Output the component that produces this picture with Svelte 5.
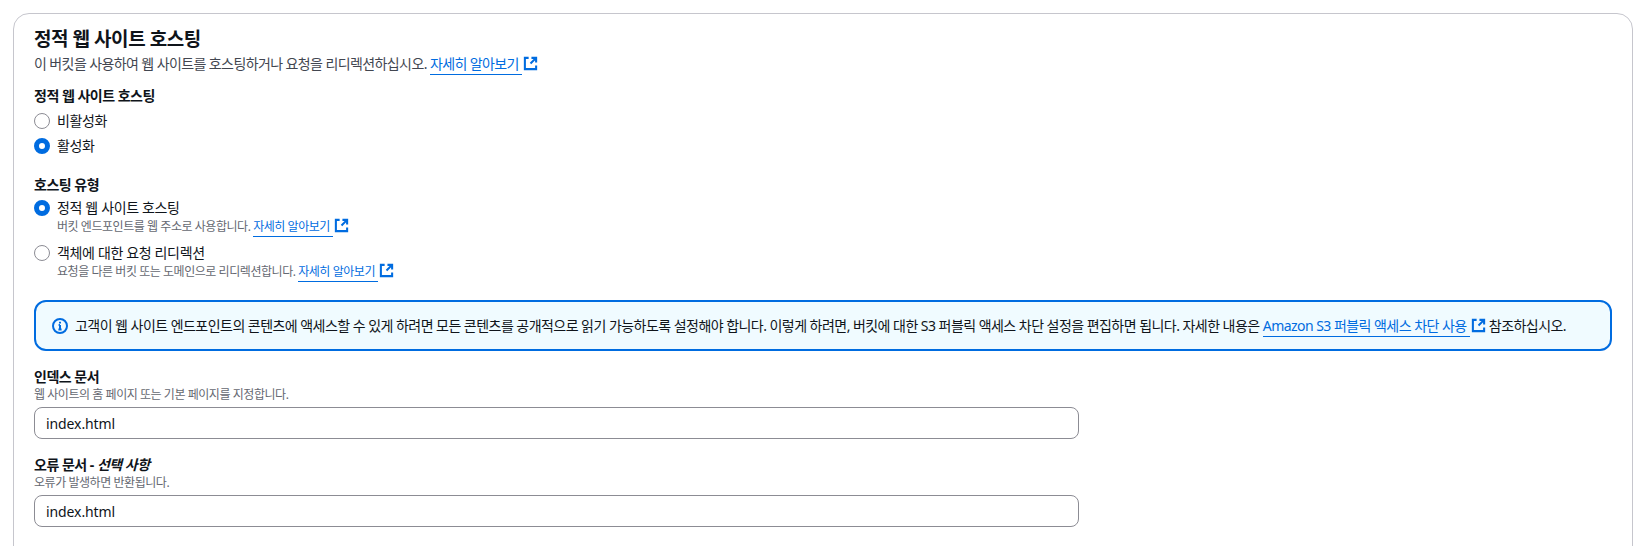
<script>
	const hostingTypes = [
		{ label: '정적 웹 사이트 호스팅', hint: '버킷 엔드포인트를 웹 주소로 사용합니다.', checked: true },
		{ label: '객체에 대한 요청 리디렉션', hint: '요청을 다른 버킷 또는 도메인으로 리디렉션합니다.', checked: false }
	];
</script>

{#snippet external()}
	<svg class="ext" viewBox="0 0 16 16" aria-hidden="true">
		<path d="M6 2H2v12h12v-4" />
		<path d="M9 2h5v5M14 2 8 8" />
	</svg>
{/snippet}

{#snippet more(text)}
	<a href="#top" class="link"><span class="link-text">{text}&nbsp;</span>{@render external()}</a>
{/snippet}

<main class="page">
	<section class="card">
		<header class="head">
			<h2>정적 웹 사이트 호스팅</h2>
			<p>이 버킷을 사용하여 웹 사이트를 호스팅하거나 요청을 리디렉션하십시오. {@render more('자세히 알아보기')}</p>
		</header>

		<div class="field">
			<div class="label">정적 웹 사이트 호스팅</div>
			<div class="radio-row"><span class="radio"></span><span>비활성화</span></div>
			<div class="radio-row"><span class="radio on"></span><span>활성화</span></div>
		</div>

		<div class="field types">
			<div class="label">호스팅 유형</div>
			{#each hostingTypes as item}
				<div class="radio-row rich">
					<span class="radio" class:on={item.checked}></span>
					<div>
						<div>{item.label}</div>
						<div class="hint">{item.hint} {@render more('자세히 알아보기')}</div>
					</div>
				</div>
			{/each}
		</div>

		<div class="alert">
			<svg class="info" viewBox="0 0 16 16" aria-hidden="true">
				<circle cx="8" cy="8" r="7" />
				<path d="M8 7v4.5M6.4 11.5h3.2M6.6 7H8" />
				<path d="M8 3.8v1.7" />
			</svg>
			<p>고객이 웹 사이트 엔드포인트의 콘텐츠에 액세스할 수 있게 하려면 모든 콘텐츠를 공개적으로 읽기 가능하도록 설정해야 합니다. 이렇게 하려면, 버킷에 대한 S3 퍼블릭 액세스 차단 설정을 편집하면 됩니다. 자세한 내용은 {@render more('Amazon S3 퍼블릭 액세스 차단 사용')} 참조하십시오.</p>
		</div>

		<div class="field input-field">
			<div class="label">인덱스 문서</div>
			<div class="hint">웹 사이트의 홈 페이지 또는 기본 페이지를 지정합니다.</div>
			<input type="text" value="index.html" />
		</div>

		<div class="field input-field second">
			<div class="label">오류 문서 - <i>선택 사항</i></div>
			<div class="hint">오류가 발생하면 반환됩니다.</div>
			<input type="text" value="index.html" />
		</div>
	</section>
</main>

<style>
	:global(body) {
		background: #fff;
		overflow: hidden;
	}

	.page {
		height: 546px;
		padding: 13px 13px 0 13px;
		box-sizing: border-box;
		overflow: hidden;
		background: #fff;
		font-family: 'Noto Sans', 'Noto Sans CJK KR', sans-serif;
		font-size: 14px;
		line-height: 20px;
		letter-spacing: -0.45px;
		color: #0f141a;
	}

	.card {
		border: 1px solid #c6c6cd;
		border-radius: 16px;
		padding: 13px 20px 40px 20px;
		min-height: 600px;
		box-sizing: border-box;
	}

	h2 {
		margin: 0;
		font-size: 19px;
		line-height: 24px;
		font-weight: 700;
	}

	.head p {
		margin: 3px 0 0;
		color: #424650;
		letter-spacing: -0.6px;
	}

	.link {
		color: #006ce0;
		text-decoration: none;
		white-space: nowrap;
	}

	.link-text {
		border-bottom: 1px solid #006ce0;
		padding-bottom: 1px;
	}

	.ext {
		width: 15px;
		height: 15px;
		margin-left: 1px;
		vertical-align: -2px;
		fill: none;
		stroke: #006ce0;
		stroke-width: 2.2;
	}

	.field {
		margin-top: 12px;
	}

	.label {
		font-weight: 700;
		font-size: 14px;
		line-height: 20px;
		letter-spacing: -0.5px;
	}

	.radio-row {
		display: flex;
		align-items: flex-start;
		gap: 7px;
		margin-top: 5px;
		letter-spacing: -0.35px;
	}

	.radio {
		flex: none;
		width: 16px;
		height: 16px;
		margin-top: 2px;
		box-sizing: border-box;
		border: 1px solid #8c8c94;
		border-radius: 50%;
		background: #fff;
	}

	.radio.on {
		border: 5px solid #006ce0;
	}

	.types {
		margin-top: 19px;
	}

	.rich {
		margin-top: 3px;
		margin-bottom: 8px;
		line-height: 20px;
	}

	.hint {
		font-size: 12px;
		line-height: 16px;
		letter-spacing: -0.45px;
		color: #656871;
	}

	.alert {
		display: flex;
		align-items: center;
		gap: 7px;
		margin-top: 20px;
		height: 51px;
		box-sizing: border-box;
		padding: 0 14px 0 16px;
		background: #f0fbff;
		border: 2px solid #006ce0;
		border-radius: 12px;
		letter-spacing: -0.54px;
	}

	.alert p {
		margin: 0;
		white-space: nowrap;
	}

	.info {
		flex: none;
		width: 16px;
		height: 16px;
		fill: none;
		stroke: #006ce0;
		stroke-width: 2;
	}

	.input-field {
		margin-top: 16px;
	}

	.second {
		margin-top: 16px;
	}

	input {
		display: block;
		width: 1045px;
		height: 32px;
		margin-top: 4px;
		padding: 0 11px;
		box-sizing: border-box;
		border: 1px solid #8c8c94;
		border-radius: 8px;
		background: #fff;
		font: inherit;
		letter-spacing: -0.1px;
		color: #0f141a;
	}
</style>
